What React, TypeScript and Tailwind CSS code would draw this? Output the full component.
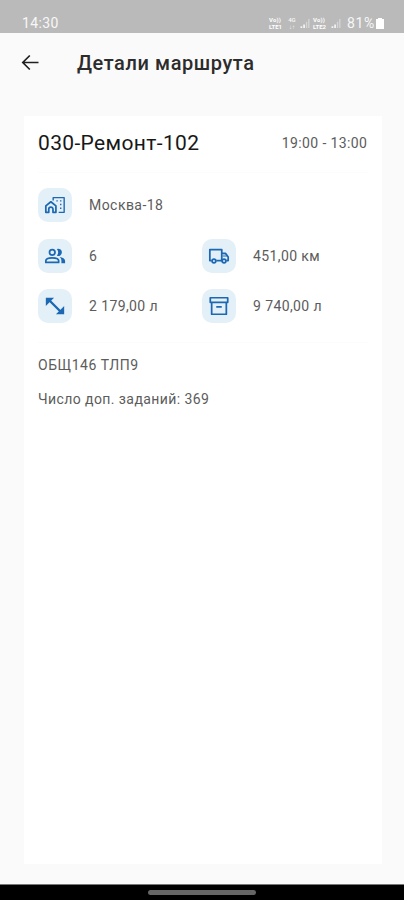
import type { ReactNode } from 'react';

function Icon({ children }: { children: ReactNode }) {
  return (
    <span className="flex size-[34px] shrink-0 items-center justify-center rounded-[10px] bg-[#e3f0f8]">
      <svg viewBox="0 0 24 24" className="size-[22px]" fill="none" stroke="#1c68b3" strokeWidth="1.900" strokeLinejoin="round">
        {children}
      </svg>
    </span>
  );
}

function Item({ icon, text, spacing }: { icon: ReactNode; text: string; spacing: string }) {
  return (
    <div className="flex items-center gap-[17px]">
      <Icon>{icon}</Icon>
      <span className={`whitespace-pre text-[14px] leading-5 text-[#5c5c5c] ${spacing}`}>{text}</span>
    </div>
  );
}

const home = (
  <>
    <path d="M2 20v-7l5.500-4.500L13 13v7H9.800v-3.500a2.300 2.300 0 0 0-4.600 0V20H2Z" />
    <path d="M10 7V4h12v16h-6" strokeWidth="1.500" />
    <path d="M13.500 7.500h1.500M17.500 7.500H19M17.500 11.500H19M17.500 15.500H19" strokeWidth="1.500" />
  </>
);

const people = (
  <>
    <circle cx="9" cy="8" r="3" />
    <path d="M2 19v-1.700C2 15.200 5.500 14 9 14s7 1.200 7 3.300V19H2Z" />
    <path d="M14 4.300A4 4 0 1 1 14 11.700Q15.500 10 15.500 8T14 4.300Z" fill="#1c68b3" stroke="none" />
    <path d="M17 13.200c3.500.5 6 2 6 4.100V20h-4v-2.700c0-1.800-.8-3.100-2-4.100Z" fill="#1c68b3" stroke="none" />
  </>
);

const arrows = (
  <>
    <path d="m6 6 12 12" strokeWidth="2.600" />
    <path d="M2 3h9L2 12ZM22 21h-9l9-9Z" fill="#1c68b3" stroke="none" />
  </>
);

const truck = (
  <>
    <path d="M4 17H2V5h13v12H9" />
    <path d="M15 9h4l3 4v4h-2M15 17h-1" />
    <path d="M16 10h3l2 3h-5Z" fill="#1c68b3" fillOpacity=".5" stroke="none" />
    <circle cx="6.500" cy="17.500" r="2" />
    <circle cx="17.500" cy="17.500" r="2" />
  </>
);

const box = (
  <path d="M2.500 3h19v5h-19ZM4 8v13h16V8M9 13h6" />
);

function Bars() {
  return (
    <svg viewBox="0 0 10 10" className="h-[9px] w-[10px]" fill="#fff">
      <path d="M0 8h2v2H0ZM3 6h2v4H3Z" opacity=".8" />
      <path d="M6 3h1.500v7H6ZM8.500 0H10v10H8.500Z" opacity=".4" />
    </svg>
  );
}

function Volte({ index }: { index: string }) {
  return (
    <span className="flex w-[16px] flex-col text-[6px] leading-[7px] font-bold text-white">
      <span className="tracking-[0.200px]">Vo))</span>
      <span>LTE{index}</span>
    </span>
  );
}

export default function App() {
  return (
    <div className="flex h-[900px] w-[404px] flex-col overflow-hidden bg-[#fafafa] font-['Roboto','Noto_Sans',sans-serif]">
      <header className="flex h-[33px] shrink-0 items-end justify-between bg-[#bababa] pr-[20px] pb-[2px] pl-[22px] text-[#f7f7f7]">
        <span className="text-[14px] leading-4 tracking-[0.4px]">14:30</span>
        <span className="flex h-4 items-center">
          <Volte index="1" />
          <span className="ml-[2px] flex w-[10px] flex-col text-center text-[6px] leading-[7px] font-medium">
            <span>4G</span>
            <span>↓↑</span>
          </span>
          <span className="ml-[3px]"><Bars /></span>
          <span className="ml-[3px]"><Volte index="2" /></span>
          <span className="ml-[2px]"><Bars /></span>
          <span className="ml-[6px] text-[14px] leading-4 tracking-[0.7px]">81%</span>
          <svg viewBox="0 0 8 11" className="ml-[1px] h-[11px] w-[8px]" fill="#fff">
            <path d="M2 0h4v1h2v10H0V1h2Z" />
          </svg>
        </span>
      </header>

      <nav className="flex h-[60px] shrink-0 items-center pl-[21px]">
        <svg viewBox="0 0 18 18" className="size-[18px]" fill="none" stroke="#202020" strokeWidth="1.700">
          <path d="M17.500 8.500H2M8.800 1.500l-7 7 7 7" />
        </svg>
        <h1 className="ml-[38px] text-[20px] leading-7 font-medium tracking-[0.58px] text-[#2c2c2c]">Детали маршрута</h1>
      </nav>

      <main className="mt-[23px] ml-[24px] flex h-[748px] w-[358px] shrink-0 flex-col bg-white px-[14px]">
        <div className="flex h-[57px] items-center justify-between border-b border-[#fcfcfc] pr-[1px] pb-[3px]">
          <h2 className="text-[21px] leading-7 tracking-[0.350px] text-[#181818]">030-Ремонт-102</h2>
          <span className="-mr-[0.400px] text-[14px] leading-5 tracking-[0.400px] text-[#5c5c5c]">19:00 - 13:00</span>
        </div>
        <div className="grid grid-cols-[164px_1fr] gap-y-[16.500px] border-b border-[#fcfcfc] pt-[15px] pb-[19px]">
          <div className="col-span-2"><Item icon={home} text="Москва-18" spacing="tracking-[0.450px]" /></div>
          <Item icon={people} text="6" spacing="tracking-normal" />
          <Item icon={truck} text="451,00 км" spacing="tracking-[0.400px]" />
          <Item icon={arrows} text="2 179,00 л" spacing="tracking-[0.400px]" />
          <Item icon={box} text="9 740,00 л" spacing="tracking-[0.400px]" />
        </div>
        <p className="mt-[12px] text-[14px] leading-5 tracking-[0.550px] text-[#5c5c5c]">ОБЩ146 ТЛП9</p>
        <p className="mt-[14px] text-[14px] leading-5 tracking-[0.420px] text-[#5c5c5c]">Число доп. заданий: 369</p>
      </main>

      <footer className="mt-auto flex h-4 shrink-0 items-center justify-center border-t border-[#777] bg-black">
        <span className="h-[5px] w-[108px] rounded-full bg-[#666]" />
      </footer>
    </div>
  );
}
